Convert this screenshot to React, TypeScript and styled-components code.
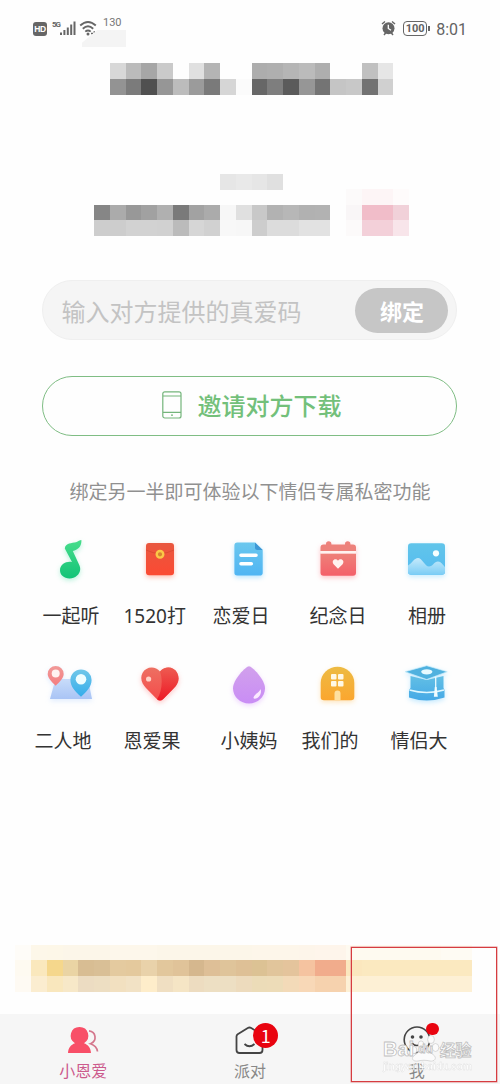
import React from 'react';
import styled, { createGlobalStyle } from 'styled-components';

const Global = createGlobalStyle`
  * { box-sizing: border-box; }
  body { margin: 0; background: #fefefe; font-family: "Noto Sans CJK SC", sans-serif; }
`;

const CELL = 15.75;

const Screen = styled.main`
  position: relative;
  width: 500px;
  height: 1084px;
  overflow: hidden;
  display: flex;
  flex-direction: column;
  background: #fefefe;
`;

const StatusBar = styled.header`
  flex: none;
  height: 63px;
  padding: 17px 33px 0;
  display: flex;
  justify-content: space-between;
  color: #636363;
`;

const StatusGroup = styled.div`
  display: flex;
  align-items: flex-start;
  svg { display: block; }
`;

const WifiIcon = styled.svg`
  margin-left: 3px;
`;

const HdTag = styled.span`
  margin-top: 5px;
  width: 14px;
  height: 14px;
  border-radius: 3px;
  background: #666;
  color: #fff;
  font: 700 8.5px/14px "Liberation Sans", sans-serif;
  letter-spacing: -0.5px;
  text-align: center;
`;

const Network = styled.span`
  margin: 3px 0 0 5px;
  width: 8px;
  font: 700 8px/9px "Liberation Sans Narrow", Roboto, sans-serif;
  letter-spacing: -1.2px;
`;

const Speed = styled.span`
  margin: -1px 0 0 6px;
  font: 400 11px/13px Roboto, sans-serif;
  color: #777;
`;

const Battery = styled.span`
  position: relative;
  margin: 4px 0 0 7px;
  width: 24px;
  height: 15px;
  border: 1.5px solid #666;
  border-radius: 4px;
  font: 700 11px/13px Roboto, sans-serif;
  text-align: center;
  &::after {
    content: '';
    position: absolute;
    right: -4px;
    top: 4px;
    width: 2px;
    height: 5px;
    background: #666;
  }
`;

const Clock = styled.time`
  margin: 3px 0 0 9px;
  font: 400 16px/19px Roboto, sans-serif;
`;

const Smudge = styled.div`
  position: absolute;
  left: 82px;
  top: 30px;
  width: 44px;
  height: 17px;
  background: #f4f4f4;
  clip-path: polygon(35% 0, 100% 0, 100% 100%, 0 100%, 0 75%);
`;

const Mosaic = styled.div<{ $start: number; $cols: number; $top?: number }>`
  flex: none;
  margin: ${(p) => p.$top ?? 0}px 0 0 ${(p) => p.$start * CELL - 0.3}px;
  width: ${(p) => p.$cols * CELL}px;
  display: grid;
  grid-template-columns: repeat(${(p) => p.$cols}, ${CELL}px);
  grid-auto-rows: ${CELL}px;
`;

const Cell = styled.i<{ $c: string }>`
  background: ${(p) => p.$c};
`;

const NameLine = styled.div`
  flex: none;
  height: 217px;
`;

const Code = styled.section`
  flex: none;
  width: 415px;
  height: 60px;
  margin-left: 42.4px;
  padding: 0 8px 0 18px;
  display: flex;
  align-items: center;
  justify-content: space-between;
  border: 1px solid #efefef;
  border-radius: 30px;
  background: #f5f5f5;
`;

const Placeholder = styled.span`
  padding-top: 1px;
  font-size: 24px;
  line-height: 34px;
  color: #c3c3c3;
`;

const Bind = styled.button`
  width: 93px;
  height: 45px;
  padding: 0;
  border: 0;
  border-radius: 23px;
  background: #c6c6c6;
  color: #fff;
  font: 700 22px/42px "Noto Sans CJK SC", sans-serif;
`;

const Invite = styled.button`
  flex: none;
  width: 415px;
  height: 60px;
  margin: 35.5px 0 0 42.4px;
  padding: 0 0 1px 4px;
  display: flex;
  align-items: center;
  justify-content: center;
  gap: 15px;
  border: 1.4px solid #7fbd84;
  border-radius: 30px;
  background: transparent;
  color: #73c07a;
  font: 500 24px/34px "Noto Sans CJK SC", sans-serif;
`;

const Hint = styled.p`
  flex: none;
  margin: 41px 0 0;
  font-size: 19px;
  line-height: 28px;
  text-align: center;
  color: #909090;
`;

const Features = styled.section`
  flex: none;
  height: 439px;
  margin: 32.5px 0 0 26.5px;
  display: grid;
  grid-template-columns: repeat(5, 89px);
  grid-auto-rows: 125px;
  align-content: start;
`;

const Feature = styled.div`
  display: flex;
  flex-direction: column;
  align-items: center;
  gap: 21px;
  svg { display: block; overflow: visible; }
`;

const Label = styled.span<{ $clipped?: boolean }>`
  width: 73px;
  font-family: "Noto Sans", "Noto Sans CJK SC", sans-serif;
  font-size: 19px;
  line-height: 28px;
  color: #333;
  text-align: ${(p) => (p.$clipped ? 'left' : 'center')};
  white-space: nowrap;
`;

const TabBar = styled.nav`
  flex: none;
  height: 71px;
  margin-top: 22px;
  display: grid;
  grid-template-columns: repeat(3, 1fr);
  background: #f6f6f6;
`;

const Tab = styled.div<{ $active?: boolean }>`
  position: relative;
  padding-top: 10px;
  display: flex;
  flex-direction: column;
  align-items: center;
  font-size: 16px;
  line-height: 24px;
  color: ${(p) => (p.$active ? '#cc5a8c' : '#888')};
  svg { display: block; margin-bottom: 2px; }
`;

const Badge = styled.span<{ $size: number; $left: number; $top: number }>`
  position: absolute;
  left: calc(50% + ${(p) => p.$left}px);
  top: ${(p) => p.$top}px;
  width: ${(p) => p.$size}px;
  height: ${(p) => p.$size}px;
  border-radius: 50%;
  background: #e90410;
  color: #fff;
  font: 400 18px/25px "Noto Sans CJK SC", sans-serif;
  text-align: center;
`;

const Watermark = styled.div`
  position: absolute;
  left: 383px;
  top: 1024px;
  width: 90px;
  height: 52px;
  color: #fff;
  svg { position: absolute; left: 24px; top: 6px; }
`;

const MarkLine = styled.div`
  height: 36px;
  padding-top: 15px;
  display: flex;
  align-items: center;
  line-height: 23px;
  font-weight: 700;
  -webkit-text-stroke: 0.8px #c0c0c0;
`;

const MarkPart = styled.span<{ $cjk?: boolean; $small?: boolean }>`
  position: relative;
  z-index: 1;
  font-family: ${(p) => (p.$cjk ? '"Noto Sans CJK SC"' : '"Liberation Sans"')}, sans-serif;
  font-size: ${(p) => (p.$small ? 12 : p.$cjk ? 16 : 20)}px;
  margin-left: ${(p) => (p.$small ? 4 : p.$cjk ? 7 : 0)}px;
  letter-spacing: ${(p) => (p.$cjk ? -0.4 : 0)}px;
`;

const MarkUrl = styled.div`
  font: 700 10.5px/12px "Liberation Sans", sans-serif;
  letter-spacing: -0.2px;
  color: #fff;
  opacity: 0.75;
  white-space: nowrap;
  -webkit-text-stroke: 0.3px #d0d0d0;
`;

const Highlight = styled.div`
  position: absolute;
  left: 351px;
  top: 947px;
  width: 146px;
  height: 135px;
  border: 1px solid #d63c40;
  box-shadow: 0 0 0 0.5px #e58a8c;
`;

const g = (s: string) => s.split(' ').map((c) => (c === '-' ? 'transparent' : '#' + (c.length === 2 ? c + c + c : c)));

const title = g(
  'd8 bb a6 ca - e0 b4 - - ad af b5 bb ae - - c0 e6 ' +
  '93 7b 50 96 bc 9b 7a d6 fb 67 7e 5b 96 74 c5 c8 72 d0',
);
const caption = g('e6 e9 e6 e0');
const blush = g('fcfafa fdf5f6 fdf5f6 fefbfb');
const account = g(
  '86 ab 98 a1 b0 7a a2 ab f7 e0 c8 b2 b7 b1 b2 - f9f6f7 f1bdc9 f1bdc9 f1d1d9 ' +
  'cd cd d2 d2 d1 bb d6 d1 f8 f7 cd dc dc e2 e2 - fcfafa f3d0d9 f3d0d9 f8e5ea',
);
const banner = g(
  'fefcf8 fdf7e9 fdf7e8 fcf6e9 fcf6e9 fcf6e9 fdf7eb fdf7eb fdf7eb fcf6e9 fcf6e9 fcf6e9 fcf6e9 fcf6e9 fcf6e9 fdf6ea fdf6ea fdf6ea fdf5ea fef5eb fef5eb fefaf0 fefaf0 fefaf0 fefaf0 fefaf0 fefaf0 fefbf3 fefbf3 ' +
  'fefaf1 fae8bd f5d78c ead4a4 d8bd93 d9bf96 e4ca9f e4c99d e9d2aa e2c79c e0c399 d5b78e debf97 dfc49a dec096 dcc294 e1c59b e4c49c f5c3a0 f1ac8c f1ac8c fbe7be fbe9c0 fbe9c0 fbe9c0 fbe9c0 fbe9c0 fbe9c0 fbe9c0 ' +
  'fefaf3 fbedd0 f9e7bd f7e8c8 ecdcc2 eddec2 f2e0c0 f2e2c5 feedca f0dfc2 f5e5c5 eddcc0 eddfc3 eddfc3 eddbbd ecdcb8 eddcb8 f3dab8 f8d8b7 f6d2ae f6d2ae fdf0d5 fdf0d5 fdf0d5 fdf0d5 fdf0d5 fdf0d5 fdf0d5 fdf0d5',
);

const Grad = ({ id, a, b }: { id: string; a: string; b: string }) => (
  <linearGradient id={id} x1="0" y1="0" x2="0" y2="1">
    <stop offset="0" stopColor={a} />
    <stop offset="1" stopColor={b} />
  </linearGradient>
);

const IconSvg = styled.svg<{ $glow: string }>`
  filter: drop-shadow(0 2px 2.5px ${(p) => p.$glow});
`;

const Icon = ({ glow, children }: { glow: string; children: React.ReactNode }) => (
  <IconSvg $glow={glow} width="50" height="44" viewBox="0 0 50 44">
    {children}
  </IconSvg>
);

const features: { label: string; clipped?: boolean; icon: React.ReactNode }[] = [
  {
    label: '一起听',
    icon: (
      <Icon glow="#2fdc9a55">
        <defs><Grad id="note" a="#47dd8b" b="#12c377" /></defs>
        <path fill="url(#note)" d="M18.8 11.5C19.5 5.5 26 6.3 30 5.2C32.5 4.6 33.5 3 35.4 3C35.8 9.5 32 12.5 26.8 14L33.5 28.5C36.5 36 29.5 41.7 23.5 41.5C18 41.3 14 38 14 33.2C14 27.5 20 24 26 25Z" />
      </Icon>
    ),
  },
  {
    label: '1520打',
    clipped: true,
    icon: (
      <Icon glow="#ff5a3c66">
        <defs><Grad id="packet" a="#e9573f" b="#fb4a33" /></defs>
        <rect x="11" y="6" width="28" height="32.3" rx="3" fill="url(#packet)" />
        <path d="M11 13Q25 20 39 13" fill="none" stroke="#d84630" strokeWidth="0.8" />
        <circle cx="25" cy="17.3" r="3.3" fill="#d78330" stroke="#fbc747" strokeWidth="2.4" />
      </Icon>
    ),
  },
  {
    label: '恋爱日',
    clipped: true,
    icon: (
      <Icon glow="#4fc0ff66">
        <defs><Grad id="doc" a="#6bc7ee" b="#4fb5f3" /></defs>
        <path d="M13.5 5.5H31L38.7 13V35.3A3 3 0 0 1 35.7 38.5H13.5A3 3 0 0 1 10.4 35.3V8.5A3 3 0 0 1 13.5 5.5Z" fill="url(#doc)" />
        <path d="M31 5.5V10.5Q31 13 33.5 13H38.7Z" fill="#3d98d6" />
        <path d="M17 18.3H32M17 26.7H27.3" stroke="#fff" strokeWidth="3.6" strokeLinecap="round" />
      </Icon>
    ),
  },
  {
    label: '纪念日',
    icon: (
      <Icon glow="#ff6d7a66">
        <defs><Grad id="cal" a="#ee8179" b="#f4606a" /></defs>
        <path d="M13 9V7A2.7 2.7 0 0 1 18.4 7V7.5H32V7A2.7 2.7 0 0 1 37.4 7V7.5H40A3 3 0 0 1 43 10.5V14H7.5V10.5A3 3 0 0 1 10.5 7.5H13Z" fill="#ed817b" />
        <path d="M7.5 16.5H43V35.7A3 3 0 0 1 40 38.7H10.5A3 3 0 0 1 7.5 35.7Z" fill="url(#cal)" />
        <path d="M7.5 14H43V16.5H7.5Z" fill="#fff2ef" />
        <path d="M25 31.8L20.6 27.2C17.8 23.5 22.5 20.2 25 23.8C27.5 20.2 32.4 23.5 29.6 27.2Z" fill="#fff2f0" />
      </Icon>
    ),
  },
  {
    label: '相册',
    icon: (
      <Icon glow="#59caff55">
        <defs><Grad id="sky" a="#61c5ea" b="#55bbf0" /><Grad id="hill" a="#c6eafb" b="#7bcdf5" /></defs>
        <rect x="6" y="6.3" width="37" height="31.4" rx="3.2" fill="url(#sky)" />
        <path d="M6 28.5C10 26.5 12 21 16 21C20 21 23 29.5 27 29.5C31 29.5 32 24.5 36 24.5C39 24.5 41 28 43 30V34.5A3.2 3.2 0 0 1 39.8 37.7H9.2A3.2 3.2 0 0 1 6 34.5Z" fill="url(#hill)" />
        <circle cx="34" cy="16.3" r="3.1" fill="#f6ffff" />
      </Icon>
    ),
  },
  {
    label: '二人地',
    clipped: true,
    icon: (
      <Icon glow="#88b8ff40">
        <defs><Grad id="map" a="#c8dcfa" b="#a9c4f5" /><Grad id="pinr" a="#f19a98" b="#f57d80" /><Grad id="pinb" a="#70c7e9" b="#35adeb" /></defs>
        <path d="M9.5 17H42L46 37H4Z" fill="url(#map)" />
        <path d="M9.7 23.7C6 20 1.7 16.3 1.7 12A8 8 0 0 1 17.7 12C17.7 16.3 13.5 20 9.7 23.7Z" fill="url(#pinr)" />
        <circle cx="9.7" cy="11.5" r="4" fill="#fff2f0" />
        <path d="M35 34.8C29 29.5 24.4 24.5 24.4 18A10.6 10.6 0 0 1 45.6 18C45.6 24.5 41 29.5 35 34.8Z" fill="url(#pinb)" />
        <circle cx="35" cy="17.3" r="5.3" fill="#eefdff" />
      </Icon>
    ),
  },
  {
    label: '恩爱果',
    clipped: true,
    icon: (
      <Icon glow="#ff4b4b4d">
        <defs><Grad id="hl" a="#ed7062" b="#f54b4a" /><Grad id="hr" a="#ee5b51" b="#ed1825" /></defs>
        <path d="M25 9.5C20 3.5 11 4.5 7.5 11C4.5 17 7.5 22 11 26L22 37.2Q25 40 28 37.2L39 26C43 22 45 17 42.2 11C39 4.5 30 3.5 25 9.5Z" fill="url(#hl)" />
        <path d="M25 9.5C30 3.5 39 4.5 42.2 11C45 17 43 22 39 26L28 37.2Q25 40 22 37.2C27 30 28 18 25 9.5Z" fill="url(#hr)" />
        <circle cx="13.6" cy="17" r="2.6" fill="#ffd1c6" />
      </Icon>
    ),
  },
  {
    label: '小姨妈',
    icon: (
      <Icon glow="#d083ff55">
        <defs><Grad id="drop" a="#d1a0ec" b="#c98df5" /></defs>
        <path d="M25 4.3C28 4.3 41 17.5 41 26.2A16 15.2 0 0 1 9 26.2C9 17.5 22 4.3 25 4.3Z" fill="url(#drop)" />
        <path d="M29.5 35.5C31 31.5 36 30 36.5 27C38.5 32 34 37 30.5 36.8Q29.2 36.6 29.5 35.5Z" fill="#fbeaff" />
      </Icon>
    ),
  },
  {
    label: '我们的',
    clipped: true,
    icon: (
      <Icon glow="#ffb53c55">
        <defs><Grad id="home" a="#edbb43" b="#fba62f" /></defs>
        <path d="M7.7 21A16.8 16.3 0 0 1 41.3 21V35A3.3 3.3 0 0 1 38 38.3H11A3.3 3.3 0 0 1 7.7 35Z" fill="url(#home)" />
        <g fill="#fff8e6">
          <rect x="18" y="12" width="5.5" height="5.5" rx="1" /><rect x="25" y="12" width="5.5" height="5.5" rx="1" />
          <rect x="18" y="19" width="5.5" height="5.5" rx="1" /><rect x="25" y="19" width="5.5" height="5.5" rx="1" />
        </g>
        <path d="M21.5 38.3V31.5A3 3 0 0 1 27.5 31.5V38.3Z" fill="#fee0a0" />
      </Icon>
    ),
  },
  {
    label: '情侣大',
    clipped: true,
    icon: (
      <Icon glow="#50bfff55">
        <defs><Grad id="cap" a="#62bfe5" b="#45a9e6" /></defs>
        <path d="M8.5 14L24.7 18L41.5 14V26L42.5 28V35.5Q24.7 41.5 7 35.5V28L8.5 26Z" fill="url(#cap)" />
        <path d="M7.5 28Q24.7 33 42 28" fill="none" stroke="#dff7ff" strokeWidth="1.4" />
        <path d="M3 9.7L24.7 3.7L45.3 9.7L24.7 17.5Z" fill="#4fb1df" stroke="#c7edfa" strokeWidth="0.7" />
        <ellipse cx="24.8" cy="9.8" rx="5.6" ry="2.6" fill="#e8faff" />
        <path d="M33.7 14.5V27" stroke="#e8faff" strokeWidth="1.3" />
        <path d="M32.8 25H34.6L35.8 34.8H31.9Z" fill="#f2fdff" />
      </Icon>
    ),
  },
];

const MosaicBlock = ({ colors, start, cols, top }: { colors: string[]; start: number; cols: number; top?: number }) => (
  <Mosaic $start={start} $cols={cols} $top={top}>
    {colors.map((c, i) => <Cell key={i} $c={c} />)}
  </Mosaic>
);

export default function App() {
  return (
    <Screen>
      <Global />
      <StatusBar>
        <StatusGroup>
          <HdTag>HD</HdTag>
          <Network>5G</Network>
          <svg width="16" height="19" viewBox="0 0 16 19">
            <path d="M1 18V15.5M4.4 18V13M7.8 18V10.5M11.2 18V7.5M14.5 18V4.5" stroke="#666" strokeWidth="2" />
          </svg>
          <WifiIcon width="18" height="19" viewBox="0 0 18 19">
            <path d="M1.2 8.5Q9 1.5 16.8 8.5M3.8 11.7Q9 7 14.2 11.7M6.3 14.6Q9 12.3 11.7 14.6" fill="none" stroke="#666" strokeWidth="1.9" />
            <circle cx="9" cy="17" r="1.5" fill="#666" /><path d="M12 16.5H14M14.5 15H16" stroke="#666" strokeWidth="1.3" />
          </WifiIcon>
          <Speed>130</Speed>
        </StatusGroup>
        <StatusGroup>
          <svg width="15" height="19" viewBox="0 0 15 19">
            <circle cx="7.5" cy="11.3" r="6" fill="#666" />
            <path d="M1 7L4 4.5M14 7L11 4.5M3 18L5 15.5M12 18L10 15.5" stroke="#666" strokeWidth="1.5" />
            <path d="M7.3 7.8V11.5L10 13.3" fill="none" stroke="#fff" strokeWidth="1.3" />
          </svg>
          <Battery>100</Battery>
          <Clock>8:01</Clock>
        </StatusGroup>
      </StatusBar>
      <Smudge />

      <NameLine>
        <MosaicBlock colors={title} start={7} cols={18} />
        <MosaicBlock colors={caption} start={14} cols={4} top={79.5} />
        <MosaicBlock colors={blush} start={22} cols={4} top={-1} />
        <MosaicBlock colors={account} start={6} cols={20} />
      </NameLine>

      <Code>
        <Placeholder>输入对方提供的真爱码</Placeholder>
        <Bind>绑定</Bind>
      </Code>
      <Invite>
        <svg width="20" height="28" viewBox="0 0 20 28" fill="none" stroke="#74b57b" strokeWidth="1.2">
          <rect x="0.8" y="0.8" width="18.2" height="26.2" rx="2" />
          <path d="M1 5H19M1 21.3H19" /><path d="M9 24.2H11" />
        </svg>
        邀请对方下载
      </Invite>
      <Hint>绑定另一半即可体验以下情侣专属私密功能</Hint>

      <Features>
        {features.map((f) => (
          <Feature key={f.label}>
            {f.icon}
            <Label $clipped={f.clipped}>{f.label}</Label>
          </Feature>
        ))}
      </Features>

      <MosaicBlock colors={banner} start={1} cols={29} top={-31.5} />

      <TabBar>
        <Tab $active>
          <svg width="32" height="32" viewBox="0 0 32 32">
            <path d="M12.5 3A8.7 8.7 0 0 1 17 19.2C21 20.5 23.8 24 24 29H1C1.2 24 4 20.5 8 19.2A8.7 8.7 0 0 1 12.5 3Z" fill="#f84f68" />
            <path d="M22 6.8C29 7.5 30.5 17 23.5 19.8C27 21 30 23.5 30.5 27.5" fill="none" stroke="#d4778d" strokeWidth="1.7" />
          </svg>
          小恩爱
        </Tab>
        <Tab>
          <svg width="32" height="32" viewBox="0 0 32 32" fill="none" stroke="#444" strokeWidth="1.8">
            <path d="M2.5 12.5Q2.5 11 3.7 10.2L13.8 4Q15.5 3 17.2 4L27.3 10.2Q28.5 11 28.5 12.5V26Q28.5 29 25.5 29H5.5Q2.5 29 2.5 26Z" />
            <path d="M10.5 20Q15.5 24.5 20.5 20" />
          </svg>
          派对
          <Badge $size={25} $left={3.3} $top={9}>1</Badge>
        </Tab>
        <Tab>
          <svg width="32" height="32" viewBox="0 0 32 32" fill="none" stroke="#444" strokeWidth="1.6">
            <circle cx="16" cy="15.8" r="12.8" />
            <path d="M11 19Q15.5 24 21 19" />
            <circle cx="11.5" cy="13" r="1" fill="#444" /><circle cx="20" cy="13" r="1" fill="#444" />
          </svg>
          我
          <Badge $size={12.5} $left={9.5} $top={9} />
        </Tab>
      </TabBar>

      <Watermark>
        <svg width="34" height="34" viewBox="0 0 34 34" fill="#fbfbfb" stroke="#cacaca" strokeWidth="0.7">
          <ellipse cx="7" cy="20" rx="2.8" ry="3.6" />
          <ellipse cx="14" cy="14.5" rx="2.8" ry="3.6" />
          <ellipse cx="24" cy="9.5" rx="3.4" ry="4" />
          <ellipse cx="28.5" cy="17.5" rx="3.3" ry="4" />
          <path d="M17 19.5C21 19.5 22 22 26 24.5C31 28 27 32 23 31C19 30 15 30 11 31C6 32 3 28 8 25C12 22 13 19.5 17 19.5Z" />
        </svg>
        <MarkLine>
          <MarkPart>Bai</MarkPart>
          <MarkPart $small>du</MarkPart>
          <MarkPart $cjk>经验</MarkPart>
        </MarkLine>
        <MarkUrl>jingyan.baidu.com</MarkUrl>
      </Watermark>
      <Highlight />
    </Screen>
  );
}
